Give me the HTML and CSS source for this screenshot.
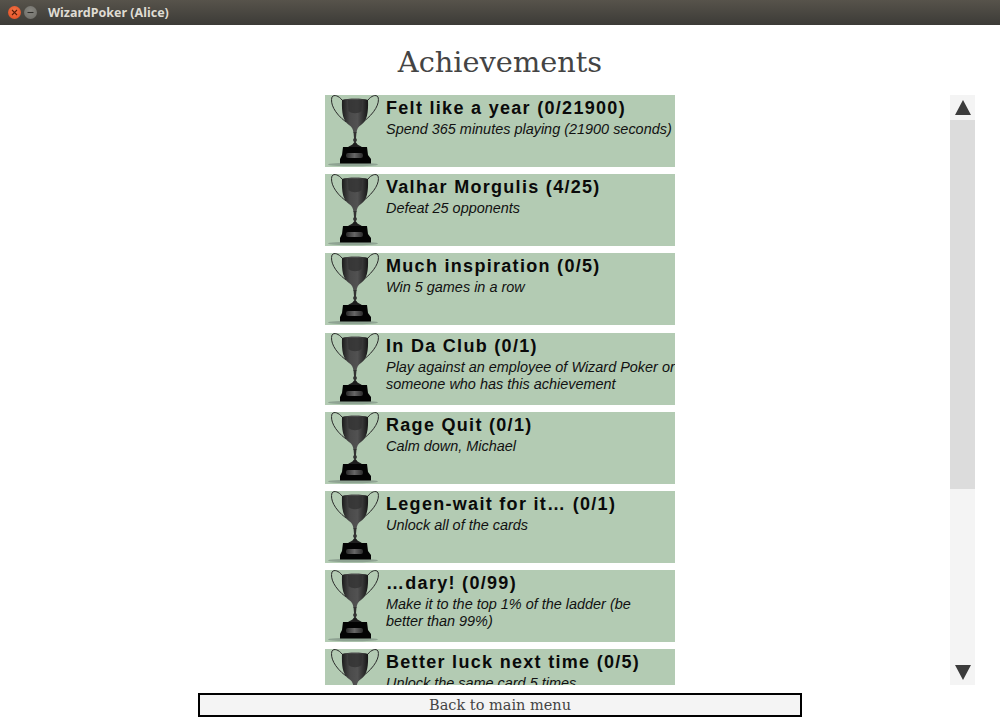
FILE: index.html
```html
<!DOCTYPE html>
<html lang="en">
<head>
    <meta charset="UTF-8">
    <title>WizardPoker (Alice)</title>
    <link rel="stylesheet" href="styles.css">
</head>
<body>
    <svg class="defs" width="0" height="0">
        <defs>
            <linearGradient id="cupFill" x1="0" x2="1" y1="0" y2="0">
                <stop offset="0" stop-color="#1c1c1c"/>
                <stop offset="0.3" stop-color="#4a4a4a"/>
                <stop offset="0.6" stop-color="#525252"/>
                <stop offset="1" stop-color="#161616"/>
            </linearGradient>
            <linearGradient id="plaqueFill" x1="0" x2="1" y1="0" y2="0">
                <stop offset="0" stop-color="#2c2c2c"/>
                <stop offset="0.5" stop-color="#666"/>
                <stop offset="1" stop-color="#2c2c2c"/>
            </linearGradient>
            <symbol id="trophy" viewBox="0 0 60 72">
                <ellipse cx="28" cy="69.5" rx="25" ry="1.8" fill="#85998a" opacity="0.8"/>
                <path d="M17 5 C14 1 9 -1 7 2 C5 8 9 18 21 27" fill="none" stroke="#2a2a2a" stroke-width="1"/>
                <path d="M43 5 C46 1 51 -1 53 2 C55 8 50 18 38 27" fill="none" stroke="#2a2a2a" stroke-width="1"/>
                <path d="M17 5 C23 3 37 3 43 5 C43.5 18 42 26 36 30 C33 32 32 34 31.5 38 L28.5 38 C28 34 27 32 24 30 C18 26 16.5 18 17 5 Z" fill="url(#cupFill)"/>
                <path d="M23 5 C27 4.5 33 4.5 37 5 L36.5 16 C33 19 27 19 23.5 16 Z" fill="#2f2f2f" opacity="0.7"/>
                <path d="M28.5 37 H31.5 L31 43 L32 45 L31 47 L31.5 50 H28.5 L29 47 L28 45 L29 43 Z" fill="#333"/>
                <path d="M22 53 C25 50 28 50 28.5 48 H31.5 C32 50 35 50 38 53 Z" fill="#1e1e1e"/>
                <path d="M18 52 H42 L43 60 L46 64 V68.5 H15 V64 L17 60 Z" fill="#030303"/>
                <rect x="21" y="58" width="17" height="5" rx="2" fill="url(#plaqueFill)"/>
            </symbol>
        </defs>
    </svg>

    <header class="titlebar">
        <span class="win-btn win-close">
            <svg width="7" height="7" viewBox="0 0 7 7"><path d="M1 1 L6 6 M6 1 L1 6" stroke="#5a1e08" stroke-width="1.1"/></svg>
        </span>
        <span class="win-btn win-min">
            <svg width="7" height="7" viewBox="0 0 7 7"><path d="M0.5 3.5 H6.5" stroke="#2f2e2a" stroke-width="1.1"/></svg>
        </span>
        <span class="win-title">WizardPoker (Alice)</span>
    </header>

    <h1 class="page-title">Achievements</h1>

    <main class="content">
        <div class="list">
            <div class="card">
                <svg class="cup"><use href="#trophy"/></svg>
                <div class="card-text">
                    <div class="card-name">Felt like a year (0/21900)</div>
                    <div class="card-desc">Spend 365 minutes playing (21900 seconds)</div>
                </div>
            </div>
            <div class="card">
                <svg class="cup"><use href="#trophy"/></svg>
                <div class="card-text">
                    <div class="card-name">Valhar Morgulis (4/25)</div>
                    <div class="card-desc">Defeat 25 opponents</div>
                </div>
            </div>
            <div class="card">
                <svg class="cup"><use href="#trophy"/></svg>
                <div class="card-text">
                    <div class="card-name">Much inspiration (0/5)</div>
                    <div class="card-desc">Win 5 games in a row</div>
                </div>
            </div>
            <div class="card">
                <svg class="cup"><use href="#trophy"/></svg>
                <div class="card-text">
                    <div class="card-name">In Da Club (0/1)</div>
                    <div class="card-desc">Play against an employee of Wizard Poker or<br>someone who has this achievement</div>
                </div>
            </div>
            <div class="card">
                <svg class="cup"><use href="#trophy"/></svg>
                <div class="card-text">
                    <div class="card-name">Rage Quit (0/1)</div>
                    <div class="card-desc">Calm down, Michael</div>
                </div>
            </div>
            <div class="card">
                <svg class="cup"><use href="#trophy"/></svg>
                <div class="card-text">
                    <div class="card-name">Legen-wait for it… (0/1)</div>
                    <div class="card-desc">Unlock all of the cards</div>
                </div>
            </div>
            <div class="card">
                <svg class="cup"><use href="#trophy"/></svg>
                <div class="card-text">
                    <div class="card-name">…dary! (0/99)</div>
                    <div class="card-desc">Make it to the top 1% of the ladder (be<br>better than 99%)</div>
                </div>
            </div>
            <div class="card">
                <svg class="cup"><use href="#trophy"/></svg>
                <div class="card-text">
                    <div class="card-name">Better luck next time (0/5)</div>
                    <div class="card-desc">Unlock the same card 5 times</div>
                </div>
            </div>
        </div>

        <div class="scrollbar">
            <div class="scroll-btn"><span class="arrow-up"></span></div>
            <div class="scroll-track"><div class="scroll-thumb"></div></div>
            <div class="scroll-btn"><span class="arrow-down"></span></div>
        </div>
    </main>

    <footer class="footer">
        <button class="back-btn">Back to main menu</button>
    </footer>
</body>
</html>
```

FILE: styles.css
```css
html, body {
    margin: 0;
    padding: 0;
    height: 100%;
}
body {
    background-color: #fff;
    display: flex;
    flex-direction: column;
    height: 725px;
    overflow: hidden;
    font-family: "Liberation Sans", Arial, sans-serif;
}
.defs {
    position: absolute;
}
.titlebar {
    height: 25px;
    flex: none;
    display: flex;
    align-items: center;
    padding-left: 8px;
    box-sizing: border-box;
    background: linear-gradient(#57534b, #3c3b37);
}
.win-btn {
    width: 13px;
    height: 13px;
    border-radius: 50%;
    margin-right: 3px;
    display: flex;
    align-items: center;
    justify-content: center;
}
.win-close {
    background: radial-gradient(circle at 50% 40%, #f4764a, #e0491c);
}
.win-min {
    background: radial-gradient(circle at 50% 40%, #8a8983, #6b6a65);
}
.win-title {
    margin-left: 8px;
    font-family: "Noto Sans", sans-serif;
    font-weight: bold;
    font-size: 12.5px;
    color: #dfdbd2;
}
.page-title {
    flex: none;
    height: 70px;
    margin: 0;
    text-align: center;
    font-family: "DejaVu Serif", serif;
    font-weight: normal;
    font-size: 28.8px;
    line-height: 74px;
    color: #444;
}
.content {
    flex: none;
    height: 590px;
    display: grid;
    grid-template-columns: 1fr 350px 1fr;
}
.list {
    grid-column: 2;
    overflow: hidden;
    display: flex;
    flex-direction: column;
    gap: 7.2px;
}
.card {
    flex: none;
    height: 72px;
    display: flex;
    background-color: #b3cbb3;
}
.cup {
    flex: none;
    width: 60px;
    height: 72px;
}
.card-text {
    margin-left: 1px;
    min-width: 0;
}
.card-name {
    margin-top: 2px;
    font-size: 18px;
    line-height: 22px;
    font-weight: bold;
    letter-spacing: 1.3px;
    color: #0a0a0a;
}
.card-desc {
    margin-top: 2px;
    font-size: 14.45px;
    line-height: 17px;
    font-style: italic;
    white-space: nowrap;
    color: #111;
}
.scrollbar {
    grid-column: 3;
    justify-self: end;
    width: 25px;
    margin-right: 25px;
    display: flex;
    flex-direction: column;
    background-color: #f4f4f4;
}
.scroll-btn {
    height: 25px;
    flex: none;
    display: flex;
    align-items: center;
    justify-content: center;
}
.arrow-up, .arrow-down {
    width: 0;
    height: 0;
    border-left: 8px solid transparent;
    border-right: 8px solid transparent;
}
.arrow-up {
    border-bottom: 15px solid #3c3c3c;
}
.arrow-down {
    border-top: 15px solid #3c3c3c;
}
.scroll-track {
    flex: 1;
}
.scroll-thumb {
    height: 369px;
    background-color: #dcdcdc;
}
.footer {
    flex: none;
    padding-top: 8px;
    display: flex;
    justify-content: center;
}
.back-btn {
    width: 604px;
    height: 24px;
    padding: 0;
    box-sizing: border-box;
    border: 2px solid #000;
    background-color: #f4f4f4;
    font-family: "DejaVu Serif", serif;
    font-size: 14.5px;
    color: #444;
}
```
